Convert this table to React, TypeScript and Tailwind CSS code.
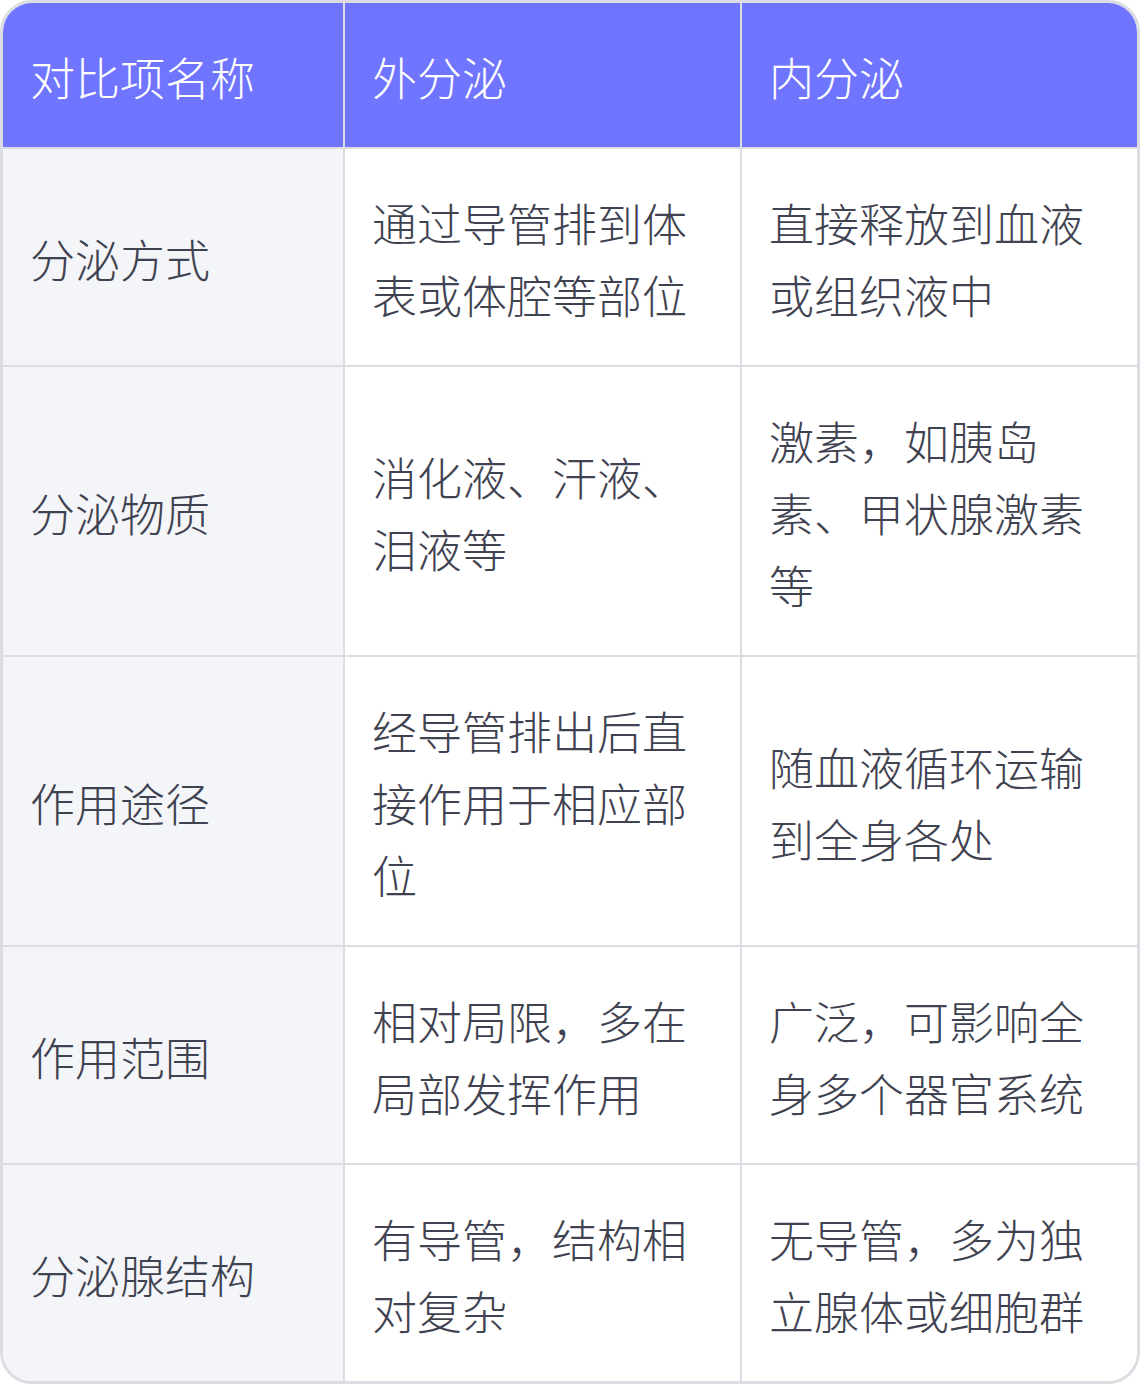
const rows = [
  ["分泌方式", "通过导管排到体表或体腔等部位", "直接释放到血液或组织液中"],
  ["分泌物质", "消化液、汗液、泪液等", "激素，如胰岛素、甲状腺激素等"],
  ["作用途径", "经导管排出后直接作用于相应部位", "随血液循环运输到全身各处"],
  ["作用范围", "相对局限，多在局部发挥作用", "广泛，可影响全身多个器官系统"],
  ["分泌腺结构", "有导管，结构相对复杂", "无导管，多为独立腺体或细胞群"],
];

const headers = ["对比项名称", "外分泌", "内分泌"];

export default function App() {
  return (
    <div
      className="w-[1140px] h-[1384px] bg-white font-light"
      style={{ fontFamily: '"Noto Sans CJK SC", "Noto Sans", sans-serif' }}
    >
      <div className="border-[3px] border-[#dcdde2] rounded-[32px] overflow-hidden">
        <div className="grid grid-cols-[342px_397px_1fr] text-[45px] leading-[72px]">
          {/* Header */}
          {headers.map((h, i) => (
            <div
              key={h}
              className={`bg-[#7075ff] text-white px-[27px] pt-[38px] pb-[34px] border-b-2 border-[#dcdde2] ${
                i < 2 ? "border-r-2" : ""
              }`}
            >
              {h}
            </div>
          ))}

          {/* Body */}
          {rows.map((row, r) =>
            row.map((cell, c) => (
              <div
                key={`${r}-${c}`}
                className={`flex items-center px-[27px] pt-[38px] pb-[34px] text-[#3f4250] border-[#dcdde2] ${
                  c === 0 ? "bg-[#f4f5f9]" : "bg-white"
                } ${c < 2 ? "border-r-2" : ""} ${r < rows.length - 1 ? "border-b-2" : ""}`}
              >
                <span>{cell}</span>
              </div>
            ))
          )}
        </div>
      </div>
    </div>
  );
}
